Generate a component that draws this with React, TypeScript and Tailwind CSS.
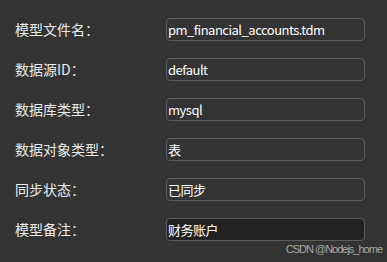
const rows = [
    { label: '模型文件名：', value: 'pm_financial_accounts.tdm' },
    { label: '数据源ID：', value: 'default' },
    { label: '数据库类型：', value: 'mysql' },
    { label: '数据对象类型：', value: '表' },
    { label: '同步状态：', value: '已同步' },
    { label: '模型备注：', value: '财务账户', focused: true },
];

export default function App() {
    return (
        <div
            className="relative h-[262px] w-[387px] overflow-hidden bg-[#333333] pt-[9px] pl-[15px] text-[14px] text-[#ececec]"
            style={{ fontFamily: '"Noto Sans CJK SC", "Noto Sans", sans-serif' }}
        >
            {rows.map((row) => (
                <div key={row.label} className="flex h-10 items-center">
                    <div className="w-[151px] shrink-0 leading-none">{row.label}</div>
                    <div
                        className={`flex h-[23px] w-[199px] items-center rounded-[4px] border border-[#5c5c5c] pl-[1px] text-[13px] leading-none tracking-[-0.5px] text-white ${
                            row.focused ? 'bg-[#222222]' : 'bg-[#333333]'
                        }`}
                    >
                        {row.value}
                    </div>
                </div>
            ))}
            <div
                className="absolute right-[5px] bottom-[7px] text-[11px] leading-none tracking-[-1px] text-[#a8a8a8]"
                style={{ fontFamily: '"Liberation Sans", Arial, sans-serif' }}
            >
                CSDN @Nodejs_home
            </div>
        </div>
    );
}
